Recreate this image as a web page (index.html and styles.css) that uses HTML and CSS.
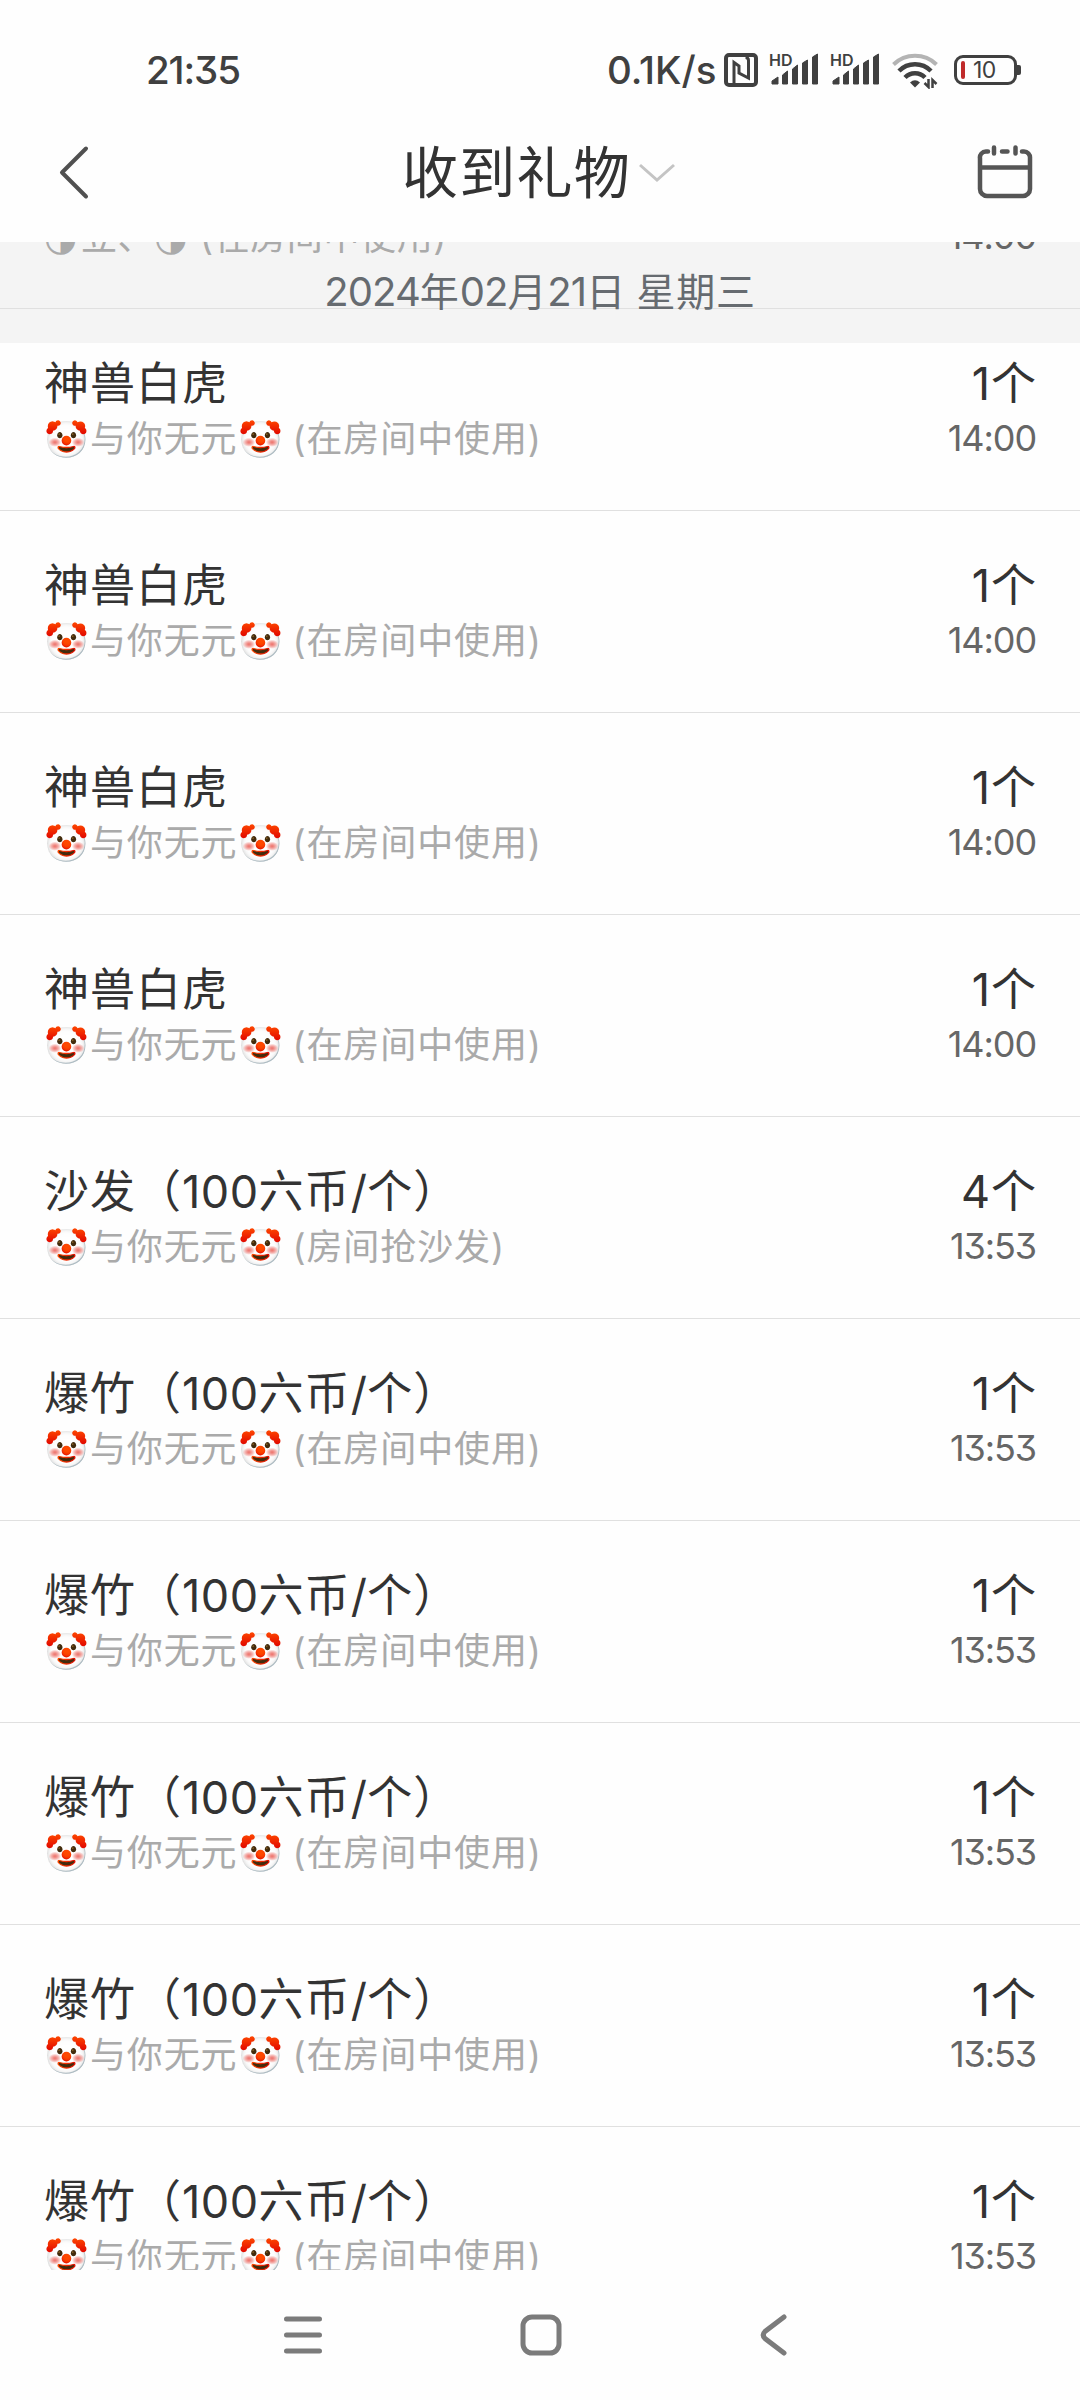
FILE: index.html
```html
<!DOCTYPE html>
<html lang="zh-CN">
<head>
<meta charset="utf-8">
<title>收到礼物</title>
<link rel="stylesheet" href="styles.css">
</head>
<body>
<svg class="defs" width="0" height="0" aria-hidden="true">
  <symbol id="signal" viewBox="0 0 50 34">
    <path d="M3 32v-3l6-4v7zM13.500 32V23l5-4v13zM23.500 32V17l5-4v19zM33.500 32V11l5-3v24zM43.500 32V5l5-3v30z" fill="#404040" stroke="#404040" stroke-linejoin="round"/>
  </symbol>
</svg>
<div class="screen">
  <div class="status">
    <span class="clock">21:35</span>
    <div class="indicators">
      <span class="speed">0.1K/s</span>
      <svg class="nfc" width="34" height="34" viewBox="0 0 34 34" fill="none" stroke="#404040">
        <rect x="2" y="2" width="30" height="30" rx="3" stroke-width="4"/>
        <path d="M10 30V9.500L15 13V20L24.500 25V7.500q0-3-3-3" stroke-width="3"/>
      </svg>
      <div class="sim"><span class="hd">HD</span><svg width="50" height="34"><use href="#signal"/></svg></div>
      <div class="sim"><span class="hd">HD</span><svg width="50" height="34"><use href="#signal"/></svg></div>
      <svg class="wifi" width="46" height="36" viewBox="0 0 46 36" fill="none" stroke="#404040" stroke-width="4">
        <path d="M1.500 11.500a31 31 0 0 1 43 0" stroke="#b4b4b4"/>
        <path d="M7 18a22.500 22.500 0 0 1 32 0M13 24.500a14 14 0 0 1 20 0" stroke-width="4.500"/>
        <path d="M18 29.500q5-4.500 10 0l-5 5z" fill="#404040" stroke="none"/>
        <path d="M36.500 26v8l-4-4M40.500 35v-8l4 4" stroke-width="2.500"/>
      </svg>
      <div class="battery"><i class="charge"></i><span>10</span></div>
    </div>
  </div>
  <header class="topbar">
    <svg width="34" height="56" viewBox="0 0 34 56" fill="none" stroke="#505050" stroke-width="4" stroke-linecap="round" stroke-linejoin="round"><path d="M29 4.500L5 28.500L29 52.500"/></svg>
    <div class="title"><h1>收到礼物</h1>
      <svg width="36" height="20" viewBox="0 0 36 20" fill="none" stroke="#c4c4c4" stroke-width="3"><path d="M1 2l17 15L35 2"/></svg>
    </div>
    <svg width="56" height="54" viewBox="0 0 56 54" fill="none" stroke="#555" stroke-width="4.500" stroke-linecap="round">
      <path d="M11 6.500H9a6 6 0 0 0-6 7V44a7 7 0 0 0 7 7H46a7 7 0 0 0 7-7V13a6 6 0 0 0-6-6.500h-2M3 22.500H53M17 2.500v6M38.500 2.500v6M25 6.500h5.500"/>
    </svg>
  </header>
  <main class="list">
    <div class="day"><span>2024<b>年</b>02<b>月</b>21<b>日</b> <b>星期三</b></span></div>
    <div class="row first"><div class="left"><div class="name">神兽白虎</div><div class="sub"><span class="moon">◑</span>立、<span class="moon">◑</span> (在房间中使用)</div></div><div class="right"><div class="qty">1<b>个</b></div><div class="time">14:00</div></div></div>
    <div class="row"><div class="left"><div class="name">神兽白虎</div><div class="sub">🤡与你无元🤡 (在房间中使用)</div></div><div class="right"><div class="qty">1<b>个</b></div><div class="time">14:00</div></div></div>
    <div class="row"><div class="left"><div class="name">神兽白虎</div><div class="sub">🤡与你无元🤡 (在房间中使用)</div></div><div class="right"><div class="qty">1<b>个</b></div><div class="time">14:00</div></div></div>
    <div class="row"><div class="left"><div class="name">神兽白虎</div><div class="sub">🤡与你无元🤡 (在房间中使用)</div></div><div class="right"><div class="qty">1<b>个</b></div><div class="time">14:00</div></div></div>
    <div class="row"><div class="left"><div class="name">神兽白虎</div><div class="sub">🤡与你无元🤡 (在房间中使用)</div></div><div class="right"><div class="qty">1<b>个</b></div><div class="time">14:00</div></div></div>
    <div class="row"><div class="left"><div class="name">沙发（<i>100</i>六币<i>/</i>个）</div><div class="sub">🤡与你无元🤡 (房间抢沙发)</div></div><div class="right"><div class="qty">4<b>个</b></div><div class="time">13:53</div></div></div>
    <div class="row"><div class="left"><div class="name">爆竹（<i>100</i>六币<i>/</i>个）</div><div class="sub">🤡与你无元🤡 (在房间中使用)</div></div><div class="right"><div class="qty">1<b>个</b></div><div class="time">13:53</div></div></div>
    <div class="row"><div class="left"><div class="name">爆竹（<i>100</i>六币<i>/</i>个）</div><div class="sub">🤡与你无元🤡 (在房间中使用)</div></div><div class="right"><div class="qty">1<b>个</b></div><div class="time">13:53</div></div></div>
    <div class="row"><div class="left"><div class="name">爆竹（<i>100</i>六币<i>/</i>个）</div><div class="sub">🤡与你无元🤡 (在房间中使用)</div></div><div class="right"><div class="qty">1<b>个</b></div><div class="time">13:53</div></div></div>
    <div class="row"><div class="left"><div class="name">爆竹（<i>100</i>六币<i>/</i>个）</div><div class="sub">🤡与你无元🤡 (在房间中使用)</div></div><div class="right"><div class="qty">1<b>个</b></div><div class="time">13:53</div></div></div>
    <div class="row"><div class="left"><div class="name">爆竹（<i>100</i>六币<i>/</i>个）</div><div class="sub">🤡与你无元🤡 (在房间中使用)</div></div><div class="right"><div class="qty">1<b>个</b></div><div class="time">13:53</div></div></div>
  </main>
  <nav class="nav">
    <svg width="40" height="42" viewBox="0 0 40 42" stroke="#7b7b7b" stroke-width="5" stroke-linecap="round"><path d="M3.500 5H36.500M3.500 21H36.500M3.500 37H36.500"/></svg>
    <svg width="42" height="42" viewBox="0 0 42 42" fill="none" stroke="#7b7b7b" stroke-width="5"><rect x="3" y="3" width="36" height="36" rx="9"/></svg>
    <svg width="30" height="44" viewBox="0 0 30 44" fill="none" stroke="#7b7b7b" stroke-width="5" stroke-linecap="round"><path d="M25 4L6 18.500Q2.500 22 6 25.500L25 40"/></svg>
  </nav>
</div>
</body>
</html>
```
FILE: styles.css
```css
* { box-sizing: border-box; }
body { margin: 0; background: #fff; font-family: Inter, "Noto Sans CJK SC", sans-serif; font-feature-settings: "cv09"; }
b, i { font-weight: inherit; font-style: normal; }
svg { display: block; flex: none; }
.defs { position: absolute; }
.screen { width: 1080px; height: 2400px; overflow: hidden; display: flex; flex-direction: column; background: #fefefe; white-space: nowrap; }

.status { height: 102px; flex: none; display: flex; justify-content: space-between; padding: 49px 63px 0 146px; color: #404040; font-weight: 500; }
.clock { font-size: 38.500px; line-height: 42px; letter-spacing: -1.100px; }
.indicators { display: flex; }
.speed { font-size: 38.500px; line-height: 42px; width: 117px; }
.nfc { margin-top: 4px; }
.sim { display: flex; position: relative; width: 50px; margin-left: 11px; padding-top: 3px; }
.hd { position: absolute; left: 0; top: 3px; font-size: 16px; line-height: 16px; font-weight: 600; }
.wifi { margin: 4px 0 0 12px; }
.battery { margin: 6px 0 0 16px; width: 63px; height: 30px; border: 3px solid #404040; border-radius: 9px; display: flex; align-items: center; position: relative; font-size: 23px; line-height: 24px; padding-left: 4px; gap: 8px; font-weight: 400; letter-spacing: -0.500px; }
.battery::after { content: ""; position: absolute; right: -7px; top: 7px; width: 4px; height: 10px; background: #404040; border-radius: 0 2px 2px 0; }
.charge { width: 4px; height: 18px; background: #c02b2b; border-radius: 2px; }

.topbar { height: 140px; flex: none; display: flex; align-items: center; justify-content: space-between; padding: 0 47px 0 57px; }
.title { display: flex; align-items: center; gap: 8px; padding: 1px 0 0 9px; }
h1 { margin: 0; font-size: 56px; line-height: 80px; letter-spacing: 1.300px; font-weight: 400; color: #333; }

.list { height: 2028px; flex: none; overflow: hidden; position: relative; }
.day { height: 101px; background: #f4f4f4; display: flex; justify-content: center; padding-top: 21px; font-size: 40px; line-height: 58px; color: #666b70; letter-spacing: -0.900px; }
.day span { position: relative; z-index: 1; }
.day b { font-size: 39px; letter-spacing: 0.800px; }
.row { height: 202px; border-bottom: 1px solid #e0e0e0; padding: 46px 44px 0; display: flex; justify-content: space-between; position: relative; }
.row.first { margin-top: -236px; }
.left, .right { display: flex; flex-direction: column; }
.right { align-items: flex-end; }
.name, .qty { height: 57px; line-height: 58px; font-size: 45px; letter-spacing: 1px; color: #333; }
.qty { margin-right: -1px; }
.name i { letter-spacing: 0.500px; }
.sub, .time { height: 54px; line-height: 54px; font-size: 36px; color: #aaa; letter-spacing: 0.900px; word-spacing: -2px; }
.time { color: #666; letter-spacing: -1.100px; line-height: 52px; }
.first .sub { letter-spacing: 0.600px; }
.moon { display: inline-block; width: 37px; height: 54px; font: 38px/54px "DejaVu Sans", sans-serif; vertical-align: top; }

.nav { flex: 1; display: flex; justify-content: center; align-items: center; gap: 197px; padding-right: 9px; }
```
